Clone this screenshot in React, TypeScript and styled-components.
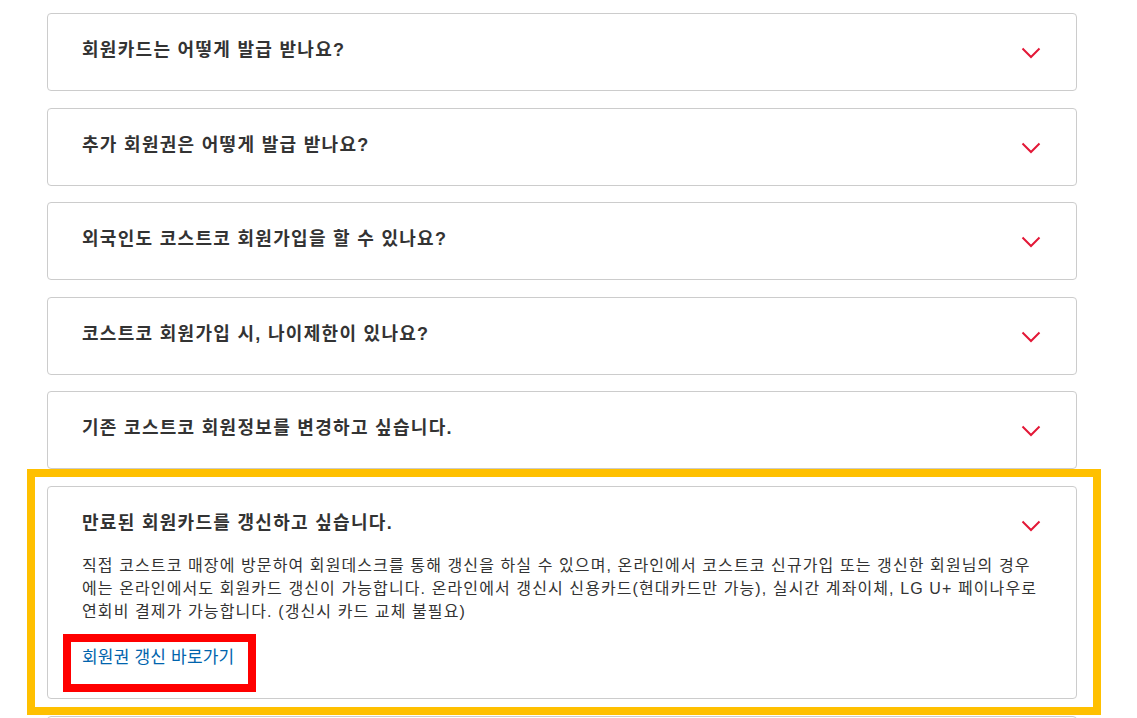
import React from "react";
import styled, { createGlobalStyle } from "styled-components";

const GlobalStyle = createGlobalStyle`
  html, body { margin: 0; padding: 0; background: #ffffff; }
  body { font-family: "Liberation Sans", "Noto Sans CJK KR", sans-serif; color: #333333; }
`;

const Page = styled.div`
  width: 1137px;
  height: 718px;
  overflow: hidden;
  padding: 13px 0 0 47px;
  box-sizing: border-box;
`;

const List = styled.div`
  width: 1030px;
  display: flex;
  flex-direction: column;
  gap: 16.6px;
`;

const Card = styled.div`
  position: relative;
  border: 1px solid #cccccc;
  border-radius: 4px;
  background: #ffffff;
  box-sizing: border-box;
  min-height: 78px;
`;

const Header = styled.div<{ $open?: boolean }>`
  display: flex;
  align-items: center;
  justify-content: space-between;
  padding: 23px 34px ${(p) => (p.$open ? "18px" : "25px")} 34px;
`;

const Title = styled.h3`
  margin: 0;
  font-size: 18px;
  line-height: 26px;
  font-weight: 700;
  letter-spacing: 1.3px;
  color: #333333;
`;

const Chevron = styled.span`
  display: flex;
  width: 20px;
  height: 12px;
  margin-top: 6px;
  margin-right: 1px;
`;

const Body = styled.div`
  padding: 0 34px 27px 34px;
`;

const Text = styled.p`
  margin: 0;
  font-size: 16px;
  line-height: 23px;
  letter-spacing: 1.1px;
  color: #333333;
`;

const LinkWrap = styled.div`
  margin-top: 22px;
`;

const Link = styled.a`
  position: relative;
  display: inline-block;
  font-size: 17px;
  line-height: 26px;
  letter-spacing: 0.2px;
  color: #0064ad;
  text-decoration: none;
`;

const Highlight = styled.span<{ $color: string }>`
  position: absolute;
  border: 8px solid ${(p) => p.$color};
  pointer-events: none;
`;

const YellowFrame = styled(Highlight)`
  top: -18px;
  left: -21px;
  right: -25px;
  bottom: -17px;
`;

const RedFrame = styled(Highlight)`
  top: -11px;
  left: -19px;
  right: -22px;
  bottom: -21px;
`;

const ChevronIcon = () => (
  <svg width="20" height="12" viewBox="0 0 20 12" fill="none">
    <path d="M1.5 1.5 L10 10 L18.5 1.5" stroke="#e31837" strokeWidth="2" />
  </svg>
);

const faqs = [
  "회원카드는 어떻게 발급 받나요?",
  "추가 회원권은 어떻게 발급 받나요?",
  "외국인도 코스트코 회원가입을 할 수 있나요?",
  "코스트코 회원가입 시, 나이제한이 있나요?",
  "기존 코스트코 회원정보를 변경하고 싶습니다.",
];

export default function App() {
  return (
    <>
      <GlobalStyle />
      <Page>
        <List>
          {faqs.map((q) => (
            <Card key={q}>
              <Header>
                <Title>{q}</Title>
                <Chevron>
                  <ChevronIcon />
                </Chevron>
              </Header>
            </Card>
          ))}
          <Card>
            <YellowFrame $color="#ffc000" />
            <Header $open>
              <Title>만료된 회원카드를 갱신하고 싶습니다.</Title>
              <Chevron>
                <ChevronIcon />
              </Chevron>
            </Header>
            <Body>
              <Text>
                직접 코스트코 매장에 방문하여 회원데스크를 통해 갱신을 하실 수 있으며, 온라인에서 코스트코 신규가입 또는 갱신한 회원님의 경우에는 온라인에서도 회원카드 갱신이 가능합니다. 온라인에서 갱신시 신용카드(현대카드만 가능), 실시간 계좌이체, LG U+ 페이나우로 연회비 결제가 가능합니다. (갱신시 카드 교체 불필요)
              </Text>
              <LinkWrap>
                <Link href="#">
                  회원권 갱신 바로가기
                  <RedFrame $color="#ff0000" />
                </Link>
              </LinkWrap>
            </Body>
          </Card>
          <Card />
        </List>
      </Page>
    </>
  );
}
